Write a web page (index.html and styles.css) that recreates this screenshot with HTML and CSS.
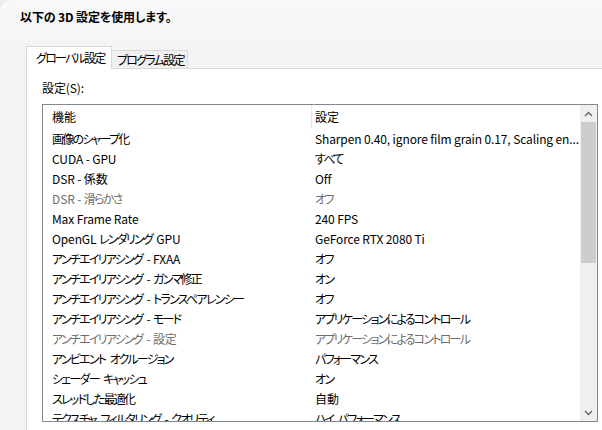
FILE: index.html
```html
<!DOCTYPE html>
<html lang="ja">
<head>
<meta charset="utf-8">
<link rel="stylesheet" href="styles.css">
</head>
<body>
<div class="frame">
  <div class="title">以下の 3D 設定を使用します。</div>
  <div class="tabs">
    <div class="tab active"><span class="j">グローバル設定</span></div>
    <div class="tab"><span class="j">プログラム設定</span></div>
  </div>
  <div class="panel">
    <div class="label">設定(S):</div>
    <div class="listbox">
      <div class="list">
        <div class="row head"><div class="c1">機能</div><div class="c2">設定</div></div>
        <div class="row"><div class="c1"><span class="j">画像のシャープ化</span></div><div class="c2">Sharpen 0.40, ignore film grain 0.17, Scaling en...</div></div>
        <div class="row"><div class="c1">CUDA - GPU</div><div class="c2"><span class="j">すべて</span></div></div>
        <div class="row"><div class="c1">DSR - 係数</div><div class="c2">Off</div></div>
        <div class="row dis"><div class="c1">DSR - <span class="j">滑らかさ</span></div><div class="c2"><span class="j">オフ</span></div></div>
        <div class="row"><div class="c1">Max Frame Rate</div><div class="c2">240 FPS</div></div>
        <div class="row"><div class="c1">OpenGL <span class="j">レンダリング</span> GPU</div><div class="c2">GeForce RTX 2080 Ti</div></div>
        <div class="row"><div class="c1"><span class="j">アンチエイリアシング</span> - FXAA</div><div class="c2"><span class="j">オフ</span></div></div>
        <div class="row"><div class="c1"><span class="j">アンチエイリアシング</span> - <span class="j">ガンマ修正</span></div><div class="c2"><span class="j">オン</span></div></div>
        <div class="row"><div class="c1"><span class="j">アンチエイリアシング</span> - <span class="j">トランスペアレンシー</span></div><div class="c2"><span class="j">オフ</span></div></div>
        <div class="row"><div class="c1"><span class="j">アンチエイリアシング</span> - <span class="j">モード</span></div><div class="c2"><span class="j">アプリケーションによるコントロール</span></div></div>
        <div class="row dis"><div class="c1"><span class="j">アンチエイリアシング</span> - 設定</div><div class="c2"><span class="j">アプリケーションによるコントロール</span></div></div>
        <div class="row"><div class="c1"><span class="j">アンビエント</span> <span class="j">オクルージョン</span></div><div class="c2"><span class="j">パフォーマンス</span></div></div>
        <div class="row"><div class="c1"><span class="j">シェーダー</span> <span class="j">キャッシュ</span></div><div class="c2"><span class="j">オン</span></div></div>
        <div class="row"><div class="c1"><span class="j">スレッドした最適化</span></div><div class="c2">自動</div></div>
        <div class="row"><div class="c1"><span class="j">テクスチャ</span> <span class="j">フィルタリング</span> - <span class="j">クオリティ</span></div><div class="c2"><span class="j">ハイ</span> <span class="j">パフォーマンス</span></div></div>
      </div>
      <div class="scrollbar">
        <div class="sbtn"><svg width="9" height="6" viewBox="0 0 9 6"><polyline points="1,5 4.5,1.5 8,5" fill="none" stroke="#606060" stroke-width="1.3"/></svg></div>
        <div class="track">
          <div class="thumb"></div>
        </div>
        <div class="sbtn"><svg width="9" height="6" viewBox="0 0 9 6"><polyline points="1,1 4.5,4.5 8,1" fill="none" stroke="#606060" stroke-width="1.3"/></svg></div>
      </div>
    </div>
  </div>
</div>
</body>
</html>
```
FILE: styles.css
```css
html, body {
  margin: 0;
  padding: 0;
  background: #ececec;
}
body {
  width: 602px;
  height: 430px;
  overflow: hidden;
  font-family: "Noto Sans CJK JP", sans-serif;
  font-feature-settings: "palt";
  font-size: 12px;
  letter-spacing: -0.12px;
  color: #000;
}
.j {
  letter-spacing: -1.75px;
  margin-right: 1.75px;
}
.frame {
  height: 430px;
  background: linear-gradient(#f8f8f8, #f3f3f3 70px);
  border-top-left-radius: 10px;
  display: flex;
  flex-direction: column;
}
.title {
  font-weight: bold;
  line-height: 16px;
  height: 16px;
  padding: 9px 0 0 20px;
  margin-bottom: 21px;
}
.tabs {
  display: flex;
  align-items: flex-end;
  margin-left: 26px;
  height: 22px;
  position: relative;
  z-index: 1;
}
.tab {
  width: 76px;
  height: 18px;
  line-height: 17px;
  padding-left: 5px;
  white-space: nowrap;
  background: #f0f0f0;
  border: 1px solid #d9d9d9;
  border-left: none;
  border-bottom: none;
  box-sizing: border-box;
}
.tab.active {
  width: 86px;
  height: 23px;
  line-height: 21px;
  margin-bottom: -1px;
  padding-left: 9px;
  background: #fff;
  border-left: 1px solid #d9d9d9;
}
.panel {
  flex: 1;
  margin-left: 26px;
  background: #fff;
  border-top: 1px solid #d9d9d9;
  border-left: 1px solid #d9d9d9;
  padding: 11px 4px 0 15px;
}
.label {
  line-height: 16px;
  height: 16px;
  padding-bottom: 8px;
}
.listbox {
  width: 556px;
  height: 318px;
  box-sizing: border-box;
  border: 1px solid #828790;
  display: flex;
  overflow: hidden;
}
.list {
  flex: 1;
  overflow: hidden;
}
.row {
  display: grid;
  grid-template-columns: 269px 1fr;
  height: 20px;
  line-height: 20px;
  white-space: nowrap;
}
.row .c1 {
  padding-left: 9px;
  overflow: hidden;
}
.row .c2 {
  padding-left: 3px;
  overflow: hidden;
}
.row.head {
  height: 24px;
  line-height: 24px;
}
.row.head .c1 {
  border-right: 1px solid #e5e5e5;
}
.row.dis {
  color: #6d6d6d;
}
.scrollbar {
  width: 17px;
  display: flex;
  flex-direction: column;
  background: #f0f0f0;
}
.sbtn {
  height: 17px;
  display: flex;
  align-items: center;
  justify-content: center;
}
.track {
  flex: 1;
}
.thumb {
  height: 141px;
  margin: 0 1px;
  background: #cdcdcd;
}
```
